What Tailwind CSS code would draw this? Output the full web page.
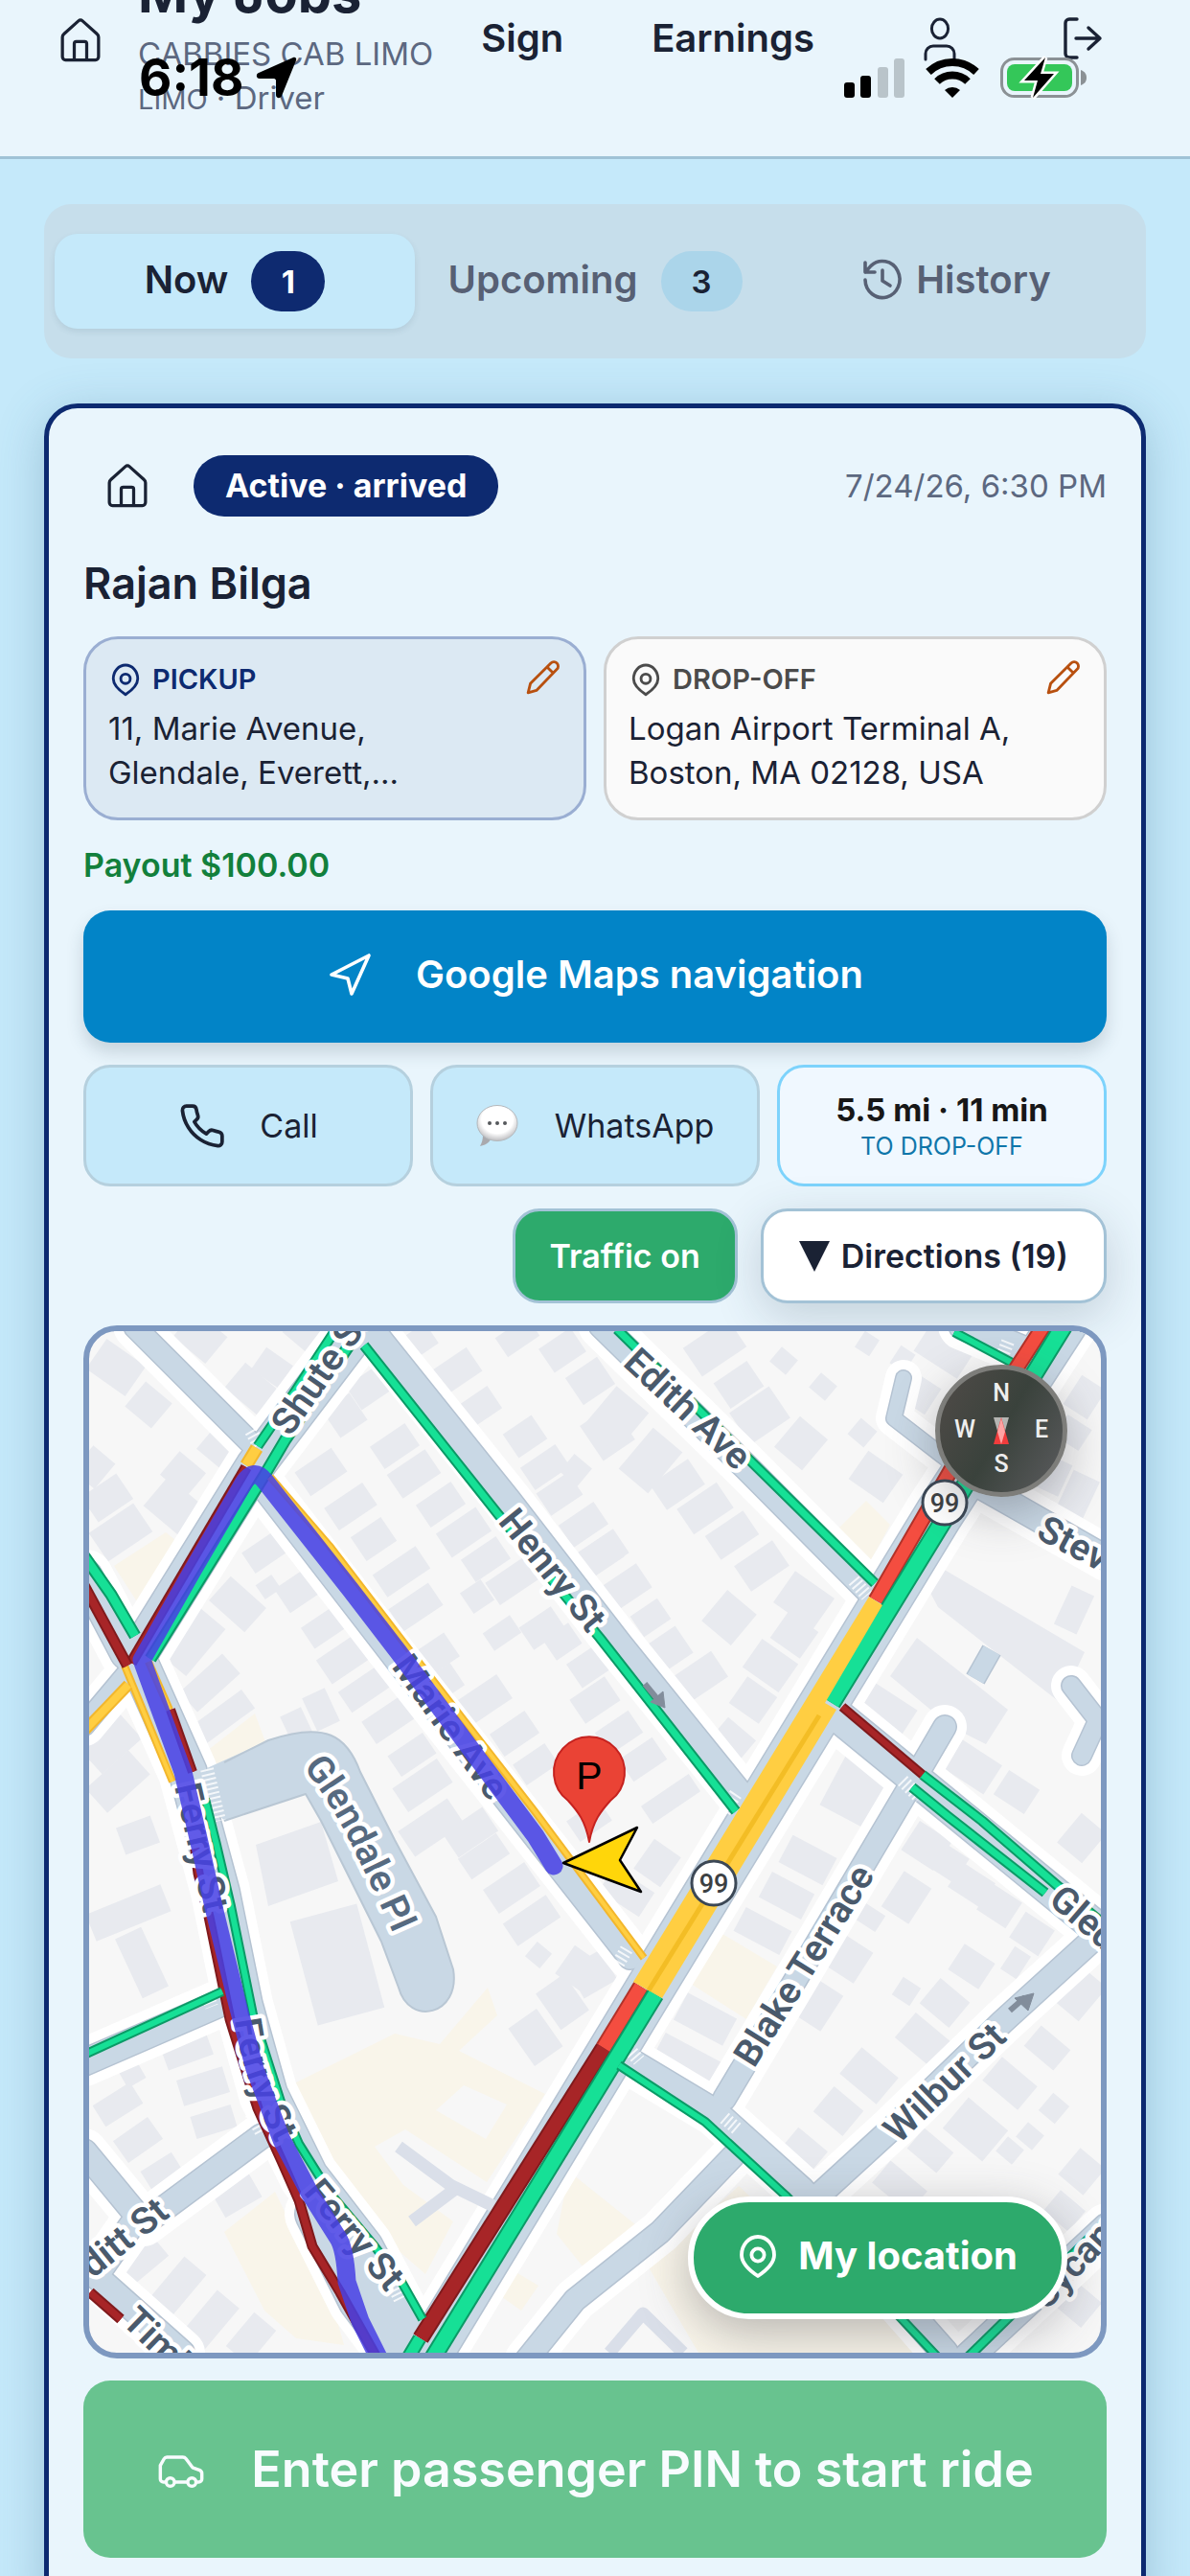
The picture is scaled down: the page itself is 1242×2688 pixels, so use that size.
<!DOCTYPE html>
<html lang="en">
<head>
  <meta charset="UTF-8" />
  <meta name="viewport" content="width=device-width, initial-scale=1" />
  <title>My Jobs</title>
  <script src="https://cdn.jsdelivr.net/npm/@tailwindcss/browser@4"></script>
</head>
<body class="h-screen overflow-hidden bg-[#c5e9fa] font-['Inter',sans-serif] text-[33px] leading-[46px] text-[#1a2234]">

  <!-- Phone status bar -->
  <div class="absolute inset-x-0 top-[58px] z-20 flex items-center pl-[145px] pr-[107px] h-[46px] text-black">
    <span class="text-[53px] font-bold">6:18</span>
    <svg class="ml-3 w-[44px] h-[44px]" viewBox="0 0 44 44"><path d="M40 1c2-1 4 1 3 3L28 41c-1 3-6 3-6-1V25c0-1-1-2-2-2H5c-4 0-4-5-1-6z" fill="currentColor" /></svg>
    <svg class="ml-auto w-[64px] h-[42px]" viewBox="0 0 64 42">
      <rect x="0" y="26" width="11" height="16" rx="3" />
      <rect x="17" y="19" width="11" height="23" rx="3" />
      <rect x="35" y="10" width="11" height="32" rx="3" fill="#b9c4ca" />
      <rect x="52" y="1" width="11" height="41" rx="3" fill="#b9c4ca" />
    </svg>
    <svg class="ml-[21px] w-[56px] h-[42px]" viewBox="0 0 56 42" fill="none" stroke="#000" stroke-width="8">
      <path d="M3 15a36 36 0 0 1 50 0" />
      <path d="M12 25a23 23 0 0 1 32 0" />
      <path d="M28 42l-8-8a12 12 0 0 1 16 0z" fill="#000" stroke="none" />
    </svg>
    <svg class="ml-[22px] w-[91px] h-[46px]" viewBox="0 0 91 46">
      <rect x="1.500" y="3.500" width="79" height="39" rx="13" fill="#e9f5fc" stroke="#8b9195" stroke-width="3" />
      <rect x="7" y="9" width="68" height="28" rx="8" fill="#34c759" />
      <path d="M84 15c5 2 6 5 6 8s-1 6-6 8z" fill="#8b9195" />
      <path d="M47 2L25 26h14l-5 18 22-25H42z" fill="#000" stroke="#fff" stroke-width="5" paint-order="stroke" />
    </svg>
  </div>

  <!-- Header -->
  <header class="relative -mt-[39px] flex items-center border-b-3 border-[#9fc2d6] bg-[#e9f5fc] pb-[36px] pl-[58px] pr-[88px]">
    <a href="#" aria-label="Home" class="mr-[34px] pb-1">
      <svg class="w-[52px] h-[52px]" viewBox="0 0 24 24" fill="none" stroke="currentColor" stroke-width="1.500" stroke-linejoin="round" stroke-linecap="round">
        <path d="M3.300 10.500a2 2 0 0 1 .7-1.500l7-6.300a1.500 1.500 0 0 1 2 0l7 6.300a2 2 0 0 1 .7 1.500V20a1.500 1.500 0 0 1-1.500 1.500H4.800A1.500 1.500 0 0 1 3.300 20z" />
        <path d="M9 21.300V13.600a1 1 0 0 1 1-1h4a1 1 0 0 1 1 1v7.700" />
      </svg>
    </a>
    <div class="whitespace-nowrap">
      <h1 class="pb-2 text-[56px] leading-[64px] font-bold">My Jobs</h1>
      <p class="text-[#5c6880]">CABBIES CAB LIMO</p>
      <p class="text-[#5c6880]"><span class="text-[29px]">LIMO</span> · Driver</p>
    </div>
    <nav class="ml-auto flex items-center gap-[107px] pb-2 text-[40px] font-semibold">
      <div class="flex gap-[92px]">
        <a href="#">Sign</a>
        <a href="#">Earnings</a>
      </div>
      <div class="flex gap-[101px]">
        <button aria-label="Profile">
          <svg class="w-[48px] h-[48px]" viewBox="0 0 24 24" fill="none" stroke="currentColor" stroke-width="1.500" stroke-linecap="round"><ellipse cx="12" cy="7" rx="4.300" ry="5" /><path d="M4.500 23v-3a4 4 0 0 1 4-4h7a4 4 0 0 1 4 4v3" /></svg>
        </button>
        <button aria-label="Log out">
          <svg class="w-[48px] h-[48px]" viewBox="0 0 24 24" fill="none" stroke="currentColor" stroke-width="1.700" stroke-linecap="round" stroke-linejoin="round"><path d="M9 2H5a2 2 0 0 0-2 2v16a2 2 0 0 0 2 2h4M15 6.500l6 5.500-6 5.500M21 12H8.500" /></svg>
        </button>
      </div>
    </nav>
  </header>

  <main class="flex flex-col gap-[47px] px-[46px] pt-[47px]">

    <!-- Tabs -->
    <div class="grid grid-cols-3 rounded-[28px] bg-[#c6deeb] px-[11px] py-[31px] text-[40px] font-semibold text-[#576074]">
      <button class="flex h-[99px] items-center justify-center gap-[24px] rounded-[24px] bg-[#c5e9fa] pb-1 text-[#1a2234] shadow-[0_3px_6px_rgba(60,90,110,0.120)]">
        Now <span class="mt-1 flex h-[63px] w-[77px] items-center justify-center rounded-full bg-[#0e2a70] text-[33px] font-bold text-white">1</span>
      </button>
      <button class="flex h-[99px] items-center justify-center gap-[24px] pb-1">
        Upcoming <span class="mt-1 flex h-[63px] w-[85px] items-center justify-center rounded-full bg-[#abd5ea] text-[33px] text-[#1a2234]">3</span>
      </button>
      <button class="flex h-[99px] items-center justify-center gap-[11px] pb-1">
        <svg class="w-[48px] h-[48px]" viewBox="0 0 24 24" fill="none" stroke="currentColor" stroke-width="1.800" stroke-linecap="round" stroke-linejoin="round"><path d="M3 12a9 9.500 0 1 0 3-7.300L3 8M3 3v5h5M12 7v5.500l4 2.500" /></svg>
        History
      </button>
    </div>

    <!-- Active job -->
    <section class="flex flex-col gap-[23px] rounded-[35px] border-5 border-[#0d2a70] bg-[#e9f5fc] px-[36px] pt-[35px] pb-[60px] shadow-[0_10px_50px_rgba(60,110,140,0.300)]">
      <div class="flex items-center gap-[23px]">
        <button aria-label="Home" class="flex h-[92px] w-[92px] items-center justify-center">
          <svg class="w-[52px] h-[52px]" viewBox="0 0 24 24" fill="none" stroke="currentColor" stroke-width="1.500" stroke-linejoin="round" stroke-linecap="round">
            <path d="M3.300 10.500a2 2 0 0 1 .7-1.500l7-6.300a1.500 1.500 0 0 1 2 0l7 6.300a2 2 0 0 1 .7 1.500V20a1.500 1.500 0 0 1-1.500 1.500H4.800A1.500 1.500 0 0 1 3.300 20z" />
            <path d="M9 21.300V13.600a1 1 0 0 1 1-1h4a1 1 0 0 1 1 1v7.700" />
          </svg>
        </button>
        <span class="flex h-[64px] items-center rounded-full bg-[#0d2a70] px-[33px] text-[34px] font-bold text-white">Active · arrived</span>
        <time class="ml-auto text-[#5c6880]">7/24/26, 6:30 PM</time>
      </div>

      <h2 class="text-[45px] leading-[65px] font-semibold">Rajan Bilga</h2>

      <div class="grid grid-cols-2 gap-[18px]">
        <div class="rounded-[36px] border-3 border-[#9aaed2] bg-[#dce9f3] px-[23px] pt-[14px] pb-[24px]">
          <div class="flex h-[56px] items-center gap-[10px] text-[29px] font-semibold text-[#0d2a70]">
            <svg class="w-[36px] h-[36px]" viewBox="0 0 24 24" fill="none" stroke="currentColor" stroke-width="1.900" stroke-linejoin="round"><path d="M3.500 11.500a8.500 9.500 0 0 1 17 0c0 4.500-4 8-8.500 11-4.500-3-8.500-6.500-8.500-11z" /><circle cx="12" cy="11.500" r="3.300" /></svg>
            <h3>PICKUP</h3>
            <button aria-label="Edit pickup" class="ml-auto pb-1 text-[#b8500f]">
              <svg class="w-[38px] h-[38px]" viewBox="0 0 24 24" fill="none" stroke="currentColor" stroke-width="1.800" stroke-linejoin="round"><path d="M2 22l1.500-6L17 2.500a2.600 2.600 0 0 1 4 4L7.500 20.500zM14.500 5l4 4" /></svg>
            </button>
          </div>
          <p>11, Marie Avenue,<br />Glendale, Everett,...</p>
        </div>
        <div class="rounded-[36px] border-3 border-[#d0d0d0] bg-[#fafafa] px-[23px] pt-[14px] pb-[24px]">
          <div class="flex h-[56px] items-center gap-[10px] text-[29px] font-semibold text-[#4b4b4b]">
            <svg class="w-[36px] h-[36px]" viewBox="0 0 24 24" fill="none" stroke="currentColor" stroke-width="1.900" stroke-linejoin="round"><path d="M3.500 11.500a8.500 9.500 0 0 1 17 0c0 4.500-4 8-8.500 11-4.500-3-8.500-6.500-8.500-11z" /><circle cx="12" cy="11.500" r="3.300" /></svg>
            <h3>DROP-OFF</h3>
            <button aria-label="Edit drop-off" class="ml-auto pb-1 text-[#b8500f]">
              <svg class="w-[38px] h-[38px]" viewBox="0 0 24 24" fill="none" stroke="currentColor" stroke-width="1.800" stroke-linejoin="round"><path d="M2 22l1.500-6L17 2.500a2.600 2.600 0 0 1 4 4L7.500 20.500zM14.500 5l4 4" /></svg>
            </button>
          </div>
          <p>Logan Airport Terminal A,<br />Boston, MA 02128, USA</p>
        </div>
      </div>

      <p class="text-[34px] leading-[48px] font-semibold text-[#12803c]">Payout $100.00</p>

      <button class="flex h-[138px] items-center justify-center gap-[45px] rounded-[28px] bg-[#0284c7] pb-1 text-[40px] font-semibold text-white shadow-[0_10px_18px_rgba(40,60,80,0.180)]">
        <svg class="w-[48px] h-[48px]" viewBox="0 0 24 24" fill="none" stroke="currentColor" stroke-width="1.800" stroke-linejoin="round"><path d="M2.500 12L22 2l-9 20-2-8z" /></svg>
        Google Maps navigation
      </button>

      <div class="grid grid-cols-3 gap-[18px]">
        <button class="flex h-[127px] items-center justify-center gap-[35px] rounded-[28px] border-3 border-[#b5d0de] bg-[#c5e9fa] text-[34px]">
          <svg class="w-[50px] h-[50px]" viewBox="0 0 24 24" fill="none" stroke="currentColor" stroke-width="1.800" stroke-linecap="round" stroke-linejoin="round"><path d="M22 16.920v3a2 2 0 0 1-2.180 2 19.790 19.790 0 0 1-8.630-3.070 19.500 19.500 0 0 1-6-6 19.790 19.790 0 0 1-3.070-8.670A2 2 0 0 1 4.110 2h3a2 2 0 0 1 2 1.720 12.840 12.840 0 0 0 .7 2.810 2 2 0 0 1-.45 2.110L8.090 9.910a16 16 0 0 0 6 6l1.270-1.270a2 2 0 0 1 2.110-.45 12.840 12.840 0 0 0 2.810.7A2 2 0 0 1 22 16.920z" /></svg>
          Call
        </button>
        <button class="flex h-[127px] items-center justify-center gap-[38px] rounded-[28px] border-3 border-[#b5d0de] bg-[#c5e9fa] text-[34px]">
          <svg class="w-[44px] h-[46px]" viewBox="0 0 44 46">
            <defs><radialGradient id="bubble" cx=".5" cy=".4" r=".6"><stop offset=".65" stop-color="#fff" /><stop offset="1" stop-color="#bdbdc0" /></radialGradient></defs>
            <path d="M7 32c0 5-1 8-3 12 5-1 9-3 11-7z" fill="#a9a9ad" />
            <ellipse cx="22" cy="20" rx="21" ry="18.500" fill="url(#bubble)" stroke="#b4b8bc" />
            <g fill="#55585c"><circle cx="14" cy="20" r="2" /><circle cx="22" cy="20" r="2" /><circle cx="30" cy="20" r="2" /></g>
          </svg>
          WhatsApp
        </button>
        <div class="flex h-[127px] flex-col items-center justify-center rounded-[28px] border-3 border-[#7dd3fc] bg-[#f0f8ff]">
          <strong class="text-[33px] leading-[42px] font-bold text-[#171717]">5.5 mi · 11 min</strong>
          <span class="text-[25px] leading-[34px] text-[#0f76aa]">TO DROP-OFF</span>
        </div>
      </div>

      <div class="flex justify-end gap-[24px] text-[34px] font-semibold">
        <button class="h-[99px] rounded-[28px] border-3 border-[#a3c2d6] bg-[#2daa6c] px-[36px] text-white">Traffic on</button>
        <button class="flex h-[99px] items-center gap-[12px] rounded-[28px] border-3 border-[#a3c2d6] bg-white px-[37px] shadow-[0_14px_50px_rgba(40,60,80,0.200)]">
          <svg class="w-[32px] h-[32px]" viewBox="0 0 32 32"><path d="M0 0h32L16 32z" fill="currentColor" /></svg>
          Directions (19)
        </button>
      </div>

      <!-- Map -->
      <div class="relative overflow-hidden rounded-[35px] border-6 border-[#7d98c0] bg-[#f7f7f7]">
        <svg class="block w-full" viewBox="93 1389 1056 1066" fill="none" stroke-linejoin="round" font-family="Roboto, sans-serif">
          <g id="buildings" fill="#e8eaef"></g>
          <g fill="#e8eaef">
            <path d="M964 1649l15-15 153 90-25 53-128-100z" />
            <path d="M957 1709l95 75-23 36-36-18-64-53z" />
            <path d="M267 1925l68-24 18 62-73 26z" />
          </g>
          <!-- Commercial areas -->
          <g fill="#f9f5ea">
            <path d="M119 1634l54-35 21 17-39 74z" />
            <path d="M216 1827l50-39 16 43-56 25z" />
            <path d="M904 1566l25 25-22 41-36-33z" />
            <path d="M754 2018l57 34-32 55-58-37z" />
            <path d="M307 2174l105-52 47 11 50-59 10 29-40 37 90 45-61 92-85-55-32 18 30 40 52 38-29 55-46-40-57-66z" />
            <path d="M234 2329l53-42 64 131 8 29-50-7-33-29z" />
            <path d="M594 2266l70 56-43 59-40-50z" />
            <path d="M677 2366l94-85 189 174-231 0z" />
            <path d="M530 2366l32 19-18 26-27-19z" />
          </g>
          <path d="M484 2176l45 20-22 36-52-30z" fill="#f7f7f7" />

          <!-- Pavements, then kerbs, then carriageways -->
          <g id="roads"></g>
          <g stroke="#dadfe9" stroke-width="13">
            <path d="M416 2240l54 40 45 22M478 2282l-48 36" />
            <path d="M636 2455l35-41 42 41" />
          </g>
          <path d="M214 1877l2-32 64-29c60-20 82-5 96 33l36 71 43 80 18 55c8 48-46 60-57 19l-18-48-63-126-16-28-85 28z" fill="#c9d8e5" />
          <path d="M234 1839l46-23c60-20 82-5 96 33l36 71 43 80 18 55c8 48-46 60-57 19l-18-48-63-126-16-28-85 28" stroke="#b9c7d4" stroke-width="2" />
          <g stroke="#fff" stroke-width="14" stroke-dasharray="2 3" opacity=".8">
            <path d="M262 1493l9 16M216 1846l13 54M654 2034l-12 20M768 1872l-12 18M891 1649l14 16M942 1858l18 18M653 2134l14 16M262 2205l12 22M217 2084l4 10M756 2210l14 12M410 2384l8 16M1052 1400l-8 20" />
          </g>

          <!-- Live traffic -->
          <g id="traffic"></g>
          <path d="M907 1666l14 9-60 102 12 7-182 301-30-17z" fill="#ffce42" />
          <path d="M855 1790L677 2077" stroke="#f3bd25" stroke-width="5" />

          <!-- One-way arrows -->
          <g stroke="#828d9b" stroke-width="6" fill="#828d9b">
            <path d="M673 1757l14 17" /><path d="M694 1782l-2-17-13 11z" stroke-width="1" />
            <path d="M1054 2098l16-14" /><path d="M1079 2080l-20 5 14 13z" stroke-width="1" />
          </g>

          <!-- Street names -->
          <defs>
            <path id="glendale" d="M316 1844Q348 1884 372 1936Q396 1984 420 2040" />
            <path id="ferry2" d="M245 2108Q256 2190 308 2270" />
          </defs>
          <g font-size="39" font-weight="600" fill="#4a5a6c" stroke="#fff" stroke-width="9" paint-order="stroke">
            <text transform="translate(303 1500) rotate(-55)">Shute St</text>
            <text transform="translate(519 1588) rotate(51)">Henry St</text>
            <text transform="translate(649 1424) rotate(43)">Edith Ave</text>
            <text transform="translate(408 1739) rotate(54)">Marie Ave</text>
            <text fill="#566a80"><textPath href="#glendale">Glendale Pl</textPath></text>
            <text transform="translate(182 1864) rotate(77)">Ferry St</text>
            <text><textPath href="#ferry2">Ferry St</textPath></text>
            <text transform="translate(316 2288) rotate(50)">Ferry St</text>
            <text transform="translate(1080 1604) rotate(28)">Stevens</text>
            <text transform="translate(787 2159) rotate(-58)">Blake Terrace</text>
            <text transform="translate(938 2238) rotate(-44)">Wilbur St</text>
            <text transform="translate(1093 1985) rotate(41)">Gledhill</text>
            <text transform="translate(97 2378) rotate(-39)">ditt St</text>
            <text transform="translate(126 2424) rotate(44)">Timber</text>
            <text transform="translate(1093 2411) rotate(-47)">Sycam</text>
          </g>
          <g font-size="27" font-weight="500" fill="#3c4043" text-anchor="middle">
            <circle cx="986" cy="1568" r="23" fill="#fff" stroke="#3c4856" stroke-width="3" /><text x="986" y="1578">99</text>
            <circle cx="745" cy="1965" r="23" fill="#fff" stroke="#3c4856" stroke-width="3" /><text x="745" y="1975">99</text>
          </g>

          <!-- Route -->
          <path d="M578 1947L559 1916 416 1724 366 1659 277 1546Q265 1530 254 1548L202 1637 148 1732 160 1765 191 1849 209 1927 223 1990 248 2092 266 2159 294 2233 323 2288 352 2334Q360 2345 362 2381L376 2422 396 2462" stroke="#4740e4" stroke-opacity=".86" stroke-width="19" stroke-linecap="round" />

          <!-- Pickup pin and driver -->
          <path d="M615 1922c-4-22-12-32-22-43a37 37 0 1 1 44 0c-10 11-18 21-22 43z" fill="#ea4335" stroke="#c5221f" stroke-width="2" />
          <text x="615" y="1867" font-size="41" font-family="Liberation Sans, sans-serif" fill="#000" text-anchor="middle">P</text>
          <path d="M588 1944l77-37-18 34 22 33z" fill="#ffd60a" stroke="#000" stroke-width="2.500" />
        </svg>

        <div class="absolute top-[35px] right-[35px] flex h-[138px] w-[138px] items-center justify-center rounded-full border-5 border-[#7d7d7a] bg-linear-120 from-[#504b48] via-[#3a423c] to-[#5c5c5f] shadow-[0_16px_50px_rgba(60,60,70,0.350)]">
          <svg class="h-full w-full" viewBox="0 0 128 128" font-family="Roboto, sans-serif" font-weight="500" font-size="25" fill="#eee" text-anchor="middle">
            <text x="64" y="33">N</text><text x="64" y="107">S</text><text x="26" y="71">W</text><text x="106" y="71">E</text>
            <path d="M56 50h16l-8 28z" fill="#b5b5b2" /><path d="M56 78h16l-8-28z" fill="#f03c3c" /><path d="M64 51l4 14-4 13-4-13z" fill="#ffa3a3" />
          </svg>
        </div>

        <button class="absolute right-[35px] bottom-[35px] flex h-[128px] items-center gap-[18px] rounded-full border-6 border-white bg-[#2daa6c] pl-[43px] pr-[46px] pb-1 text-[40px] font-bold text-white shadow-[0_14px_50px_rgba(60,60,70,0.350)]">
          <svg class="w-[48px] h-[48px]" viewBox="0 0 24 24" fill="none" stroke="currentColor" stroke-width="1.900" stroke-linejoin="round"><path d="M3.500 11.500a8.500 9.500 0 0 1 17 0c0 4.500-4 8-8.500 11-4.500-3-8.500-6.500-8.500-11z" /><circle cx="12" cy="11.500" r="3.300" /></svg>
          My location
        </button>
      </div>

      <button class="flex h-[185px] items-center justify-center gap-[47px] rounded-[28px] bg-[#68c38f] text-[52px] font-semibold text-[#f8fcff]">
        <svg class="w-[52px] h-[52px]" viewBox="0 0 24 24" fill="none" stroke="currentColor" stroke-width="1.600" stroke-linejoin="round"><path d="M4.500 18H3.500A1.500 1.500 0 0 1 2 16.500V10l1.800-3.200A1.600 1.600 0 0 1 5.200 6h7.600a2 2 0 0 1 1.600.8L17.500 11l3.500 1.300a1.800 1.800 0 0 1 1 1.700v2.500a1.500 1.500 0 0 1-1.500 1.500H19.500M9 18h6" /><circle cx="6.800" cy="18" r="2" /><circle cx="17.200" cy="18" r="2" /></svg>
        Enter passenger PIN to start ride
      </button>
    </section>
  </main>

  <script>
    const NS = "http://www.w3.org/2000/svg";

    function add(parent, tag, attrs) {
      const el = document.createElementNS(NS, tag);
      for (const k in attrs) el.setAttribute(k, attrs[k]);
      parent.appendChild(el);
    }

    // Footprints: centre x, centre y, width, height, rotation
    const A = -34, B = 33;
    const houses = [
      [121,1427,50,38,35],[155,1466,36,34,40],[209,1395,44,36,40],[262,1449,44,34,40],[284,1427,34,28,35],[316,1391,34,26,40],
      [230,1513,40,30,40],[191,1538,36,32,40],[184,1574,56,40,40],[126,1599,56,36,A],[112,1563,44,32,A],[98,1531,30,34,40],
      [116,1820,56,34,-42],[123,1859,60,34,-42],[144,1915,38,30,-20],
      [335,1536,46,30,A],[366,1572,48,28,A],[390,1606,38,30,A],[419,1640,54,28,A],[434,1677,50,28,A],[455,1727,40,30,A],[459,1759,44,28,A],[505,1774,52,30,A],[537,1809,44,28,A],[559,1841,40,26,A],
      [360,1477,34,34,A],[384,1449,36,30,A],[412,1509,44,28,A],[432,1538,48,30,A],[460,1570,44,28,A],[484,1599,50,30,A],[507,1627,44,28,A],[534,1650,48,28,A],[498,1666,26,26,A],[566,1699,40,28,A],[587,1713,32,26,A],[524,1704,34,22,A],[616,1738,40,30,A],
      [434,1402,40,26,A],[476,1431,46,30,A],[498,1470,44,28,A],[548,1499,36,30,A],[601,1534,24,24,40],[569,1531,44,28,A],[584,1559,40,28,A],[609,1591,44,28,A],[630,1620,44,30,A],[540,1395,40,24,A],[587,1409,40,30,A],[616,1441,40,34,A],[634,1495,40,44,A],
      [643,1481,44,54,40],[746,1406,56,36,A],[771,1445,42,32,A],[793,1477,50,40,A],[818,1420,22,20,40],[859,1447,22,20,40],[836,1506,38,42,40],[900,1495,22,22,40],[914,1541,44,36,35],[679,1524,40,56,40],[707,1549,48,32,A],[736,1574,50,32,A],[764,1602,48,30,A],[795,1634,48,32,A],[839,1670,50,40,35],
      [625,1624,44,30,A],[654,1656,44,30,A],[679,1688,34,26,A],[700,1720,34,34,A],[732,1749,46,32,A],[761,1688,40,42,40],[829,1706,38,34,35],[804,1738,46,36,35],[786,1774,38,34,35],[761,1820,38,42,40],[646,1808,42,28,A],[621,1774,44,30,A],[671,1836,42,28,A],[700,1877,60,22,A],[615,1900,40,26,A],
      [921,1786,60,42,B],[1011,1841,60,36,B],[1061,1870,38,30,B],[1121,1680,26,44,25],[1132,1458,30,36,B],[986,1409,54,36,B],[957,1452,40,32,B],[1125,1560,30,44,25],[1100,1540,26,36,25],[1120,1495,30,26,B],[905,1402,18,20,B],[942,1418,18,22,B],
      [893,1868,52,62,28],[967,1926,40,36,B],[843,1941,52,32,28],[821,1978,50,30,28],[796,2015,54,28,28],[736,2107,58,32,28],[714,2155,66,42,28],[886,2044,36,38,B],[854,2092,34,44,B],[907,2000,28,20,B],[946,1980,34,44,B],[986,1941,42,30,B],[1014,1967,40,30,B],[1043,1989,36,32,B],[1077,2018,36,32,B],
      [946,2078,22,22,B],[1014,2052,38,32,B],[1060,2048,20,28,B],[986,2090,40,34,40],[964,2129,50,34,40],[1093,2137,40,28,40],[907,2166,50,36,40],[875,2203,40,34,40],[839,2244,40,30,40],[1054,2174,48,32,40],[1018,2222,54,42,40],[1100,2200,22,24,40],[971,2244,40,28,40],[1075,2229,22,20,40],[1054,2244,22,20,40],[1111,2307,34,28,40],[1129,2266,34,36,40],[939,2282,50,30,40],[1129,2082,30,46,40],[1129,1918,34,40,40],[988,2390,40,34,40],[1120,2400,50,34,40],
      [686,1944,34,38,35],[654,1974,50,30,B],[618,2060,40,36,-30],
      [352,2050,72,112,-15],[134,1996,84,30,-22],[148,2048,30,68,-25],[194,2137,50,32,-20],[137,2163,22,24,-30],[212,2177,50,28,-17],[123,2196,46,26,-32],[223,2214,44,24,-17],[144,2233,44,28,-35],[169,2266,38,24,-32],[244,2285,44,42,-30],[148,2359,50,28,-40],[184,2388,62,30,-50],[219,2422,60,30,-50],[262,2440,46,30,-50],
      [450,1907,62,32,A],[491,1912,50,30,A],[505,1937,48,26,A],[534,1970,52,30,A],[555,2004,54,28,A],[562,2040,20,20,40],[606,2056,40,36,35],[587,2089,36,46,-35],[559,2126,36,48,-35],
      [276,1620,40,26,A],[280,1656,20,18,A],[312,1659,42,30,A],[248,1674,34,50,-48],[201,1713,64,36,-50],[219,1756,60,28,-42],[234,1791,62,24,-36],[337,1699,38,26,A],[359,1731,50,30,A],[380,1763,48,26,A],[405,1795,48,28,A],[335,1784,26,38,-25],[309,1799,24,28,-25],[430,1831,44,26,A],[441,1863,56,30,A],
    ];
    houses.forEach(([x, y, w, h, a]) => {
      add(buildings, "rect", { x: x - w / 2, y: y - h / 2, width: w, height: h, transform: `rotate(${a} ${x} ${y})` });
    });

    // Streets: path, carriageway width, line cap
    const streets = [
      ["M141 1385L262 1506", 23],
      ["M380 1380L266 1530 141 1731", 40],
      ["M385 1385L530 1566 646 1716 780 1882", 28],
      ["M270 1545L416 1734 658 2042", 26],
      ["M628 1383L779 1531 905 1658", 27],
      ["M1110 1380L980 1580 677 2077 445 2460", 50],
      ["M143 1731L196 1849 230 1974 254 2092 280 2185 322 2270 380 2345 425 2430", 40],
      ["M330 2310L375 2400 420 2460", 44],
      ["M90 1645L132 1725", 34],
      ["M88 1800L140 1738", 22],
      ["M88 2152L240 2086", 28],
      ["M88 2245L150 2320 273 2229M140 2318L100 2375 190 2455", 26],
      ["M1005 1383L1075 1412", 30],
      ["M943 1438L933 1480 990 1524 1010 1548", 16],
      ["M1018 1548L1064 1574 1155 1626", 26],
      ["M868 1785L950 1852 1155 2020", 34],
      ["M986 1802L955 1855 832 2063 756 2190", 24],
      ["M656 2150L746 2204 836 2285 986 2455", 28],
      ["M850 2295L932 2220 1046 2110 1145 2020", 25],
      ["M1010 2460L1155 2325", 30],
      ["M765 2250L689 2329 600 2400 550 2462", 24],
      ["M1118 1759L1146 1795 1129 1832", 20],
      ["M1035 1722L1018 1752", 20, "butt"],
    ];
    function drawStreets(color, extra) {
      streets.forEach(([d, w, cap]) => {
        if (cap && extra > 2) return;
        add(roads, "path", { d, stroke: color, "stroke-width": w + extra, "stroke-linecap": cap || "round" });
      });
    }
    drawStreets("#fff", 22);
    drawStreets("#b5c3d2", 2);
    drawStreets("#c9d8e5", -1);

    // Speed colours: [edge, fill]
    const G = ["#0b9a66", "#16e096"], Y = ["#f3b72c", "#ffce42"], R = ["#b23229", "#f44d40"], D = ["#7f1a1c", "#a72527"];
    const speeds = [
      ["M350 1388L308 1452 269 1509", G, 11],
      ["M373 1391L298 1502 275 1541 157 1731", G, 13],
      ["M268 1511L257 1529", Y, 14],
      ["M257 1531L137 1735", D, 12],
      ["M282 1541L344 1613 426 1720 558 1890 672 2043", Y, 8],
      ["M380 1404L519 1579 626 1709 768 1890", G, 11],
      ["M644 1387L789 1530 913 1652", G, 11],
      ["M996 1390L1060 1424", G, 10],
      ["M1089 1384L993 1533 914 1670", R, 17],
      ["M1110 1384L982 1591 868 1777", G, 20],
      ["M669 2073L630 2137", R, 18],
      ["M630 2137L439 2440", D, 18],
      ["M684 2081L452 2460", G, 19],
      ["M438 2440L425 2462", G, 15],
      ["M130 1738L180 1859", Y, 8],
      ["M155 1734L177 1784", Y, 8],
      ["M178 1784L201 1849", D, 10],
      ["M214 1877L226 1925 241 1989 264 2102 294 2196 312 2237 344 2288 391 2344 419 2381 441 2420", G, 10],
      ["M203 1922L207 1955 218 2000 240 2107 269 2200 294 2255 312 2296 326 2344 355 2392 392 2458", D, 11],
      ["M88 1624L116 1664 141 1707", G, 13],
      ["M88 1655L133 1738", D, 12],
      ["M88 1806L134 1758", Y, 12],
      ["M88 2144L232 2078", G, 10],
      ["M94 2392L126 2420", D, 11],
      ["M879 1781L963 1852", D, 10],
      ["M963 1852L1025 1900 1104 1968 1155 2010", G, 11],
      ["M952 1865L989 1895 1091 1975", G, 11],
      ["M646 2155L736 2214 821 2292 979 2460", G, 10],
      ["M1010 2460L1155 2318", G, 11],
    ];
    speeds.forEach(([d, [edge, fill], w]) => {
      add(traffic, "path", { d, stroke: edge, "stroke-width": w });
      add(traffic, "path", { d, stroke: fill, "stroke-width": w - 4 });
    });
  </script>
</body>
</html>
